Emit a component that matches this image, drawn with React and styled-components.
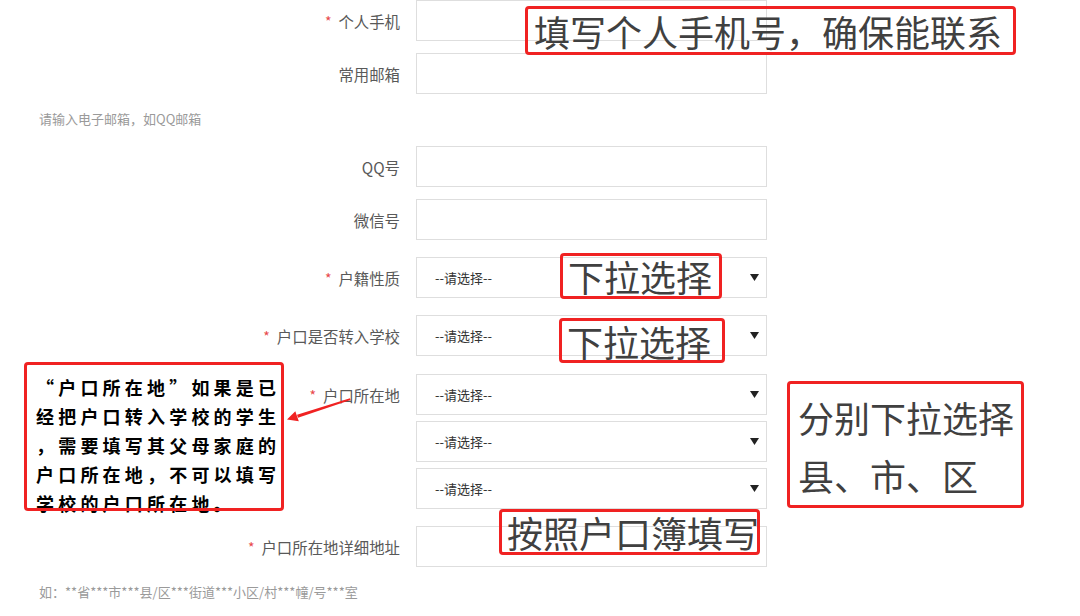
import React from "react";
import styled, { createGlobalStyle } from "styled-components";

const Global = createGlobalStyle`
  html, body { margin: 0; padding: 0; background: #fff; }
  * { box-sizing: border-box; }
`;

const Page = styled.div`
  position: relative;
  width: 1080px;
  height: 616px;
  overflow: hidden;
  background: #fff;
  font-family: "Noto Sans CJK SC", "Noto Sans", sans-serif;
`;

const Form = styled.div`
  display: flex;
  flex-direction: column;
`;

const Row = styled.div`
  display: grid;
  grid-template-columns: 400px 351px;
  column-gap: 16px;
  align-items: start;
  margin-top: ${(p) => p.$mt || 0}px;
`;

const Label = styled.div`
  height: 41px;
  display: flex;
  align-items: center;
  justify-content: flex-end;
  font-size: 15.4px;
  color: #595959;
  white-space: nowrap;
`;

const Req = styled.span`
  color: #e8484a;
  margin-right: 7px;
  font-size: 14px;
`;

const Fields = styled.div`
  display: flex;
  flex-direction: column;
  gap: 6px;
`;

const Input = styled.div`
  height: 41px;
  border: 1px solid #dedede;
  background: #fff;
`;

const Select = styled.div`
  height: 41px;
  border: 1px solid #dedede;
  background: #fff;
  display: flex;
  align-items: center;
  justify-content: space-between;
  padding: 0 7px 0 18px;
  font-size: 13px;
  color: #333;
`;

const Hint = styled.div`
  padding-left: 39px;
  font-size: 13px;
  line-height: 18px;
  color: #9a9a9a;
  margin-top: ${(p) => p.$mt || 0}px;
`;

const Callout = styled.div`
  position: absolute;
  left: ${(p) => p.$x}px;
  top: ${(p) => p.$y}px;
  width: ${(p) => p.$w}px;
  height: ${(p) => p.$h}px;
  border: 3px solid #f02222;
  border-radius: 4px;
  padding: ${(p) => p.$pad || "0 0 0 6px"};
  font-size: 36px;
  line-height: ${(p) => p.$lh || 40}px;
  color: #404040;
  white-space: nowrap;
  display: flex;
  flex-direction: column;
  justify-content: ${(p) => (p.$top ? "flex-start" : "center")};
  background: transparent;
`;

const Note = styled.div`
  position: absolute;
  left: 24px;
  top: 362px;
  width: 260px;
  height: 149px;
  padding: 11px 0 0 12px;
  font-size: 18px;
  font-weight: 700;
  letter-spacing: 4.2px;
  line-height: 29px;
  color: #000;
  white-space: nowrap;
  &::after {
    content: "";
    position: absolute;
    inset: 0;
    border: 3px solid #f02222;
    border-radius: 4px;
    z-index: 2;
  }
`;

const NoteLine = styled.div`
  position: relative;
  z-index: 1;
`;

const Arrow = styled.svg`
  position: absolute;
  left: 280px;
  top: 390px;
  overflow: visible;
`;

const Caret = () => (
  <svg width="9" height="7" viewBox="0 0 9 7">
    <polygon points="0,0 9,0 4.5,7" fill="#222" />
  </svg>
);

const Sel = () => (
  <Select>
    <span>--请选择--</span>
    <Caret />
  </Select>
);

export default function App() {
  return (
    <Page>
      <Global />
      <Form>
        <Row>
          <Label>
            <Req>*</Req>个人手机
          </Label>
          <Input />
        </Row>
        <Row $mt={12}>
          <Label>常用邮箱</Label>
          <Input />
        </Row>
        <Hint $mt={16}>请输入电子邮箱，如QQ邮箱</Hint>
        <Row $mt={18}>
          <Label>QQ号</Label>
          <Input />
        </Row>
        <Row $mt={12}>
          <Label>微信号</Label>
          <Input />
        </Row>
        <Row $mt={17}>
          <Label>
            <Req>*</Req>户籍性质
          </Label>
          <Sel />
        </Row>
        <Row $mt={17}>
          <Label>
            <Req>*</Req>户口是否转入学校
          </Label>
          <Sel />
        </Row>
        <Row $mt={18}>
          <Label>
            <Req>*</Req>户口所在地
          </Label>
          <Fields>
            <Sel />
            <Sel />
            <Sel />
          </Fields>
        </Row>
        <Row $mt={17}>
          <Label>
            <Req>*</Req>户口所在地详细地址
          </Label>
          <Input />
        </Row>
        <Hint $mt={16}>如：**省***市***县/区***街道***小区/村***幢/号***室</Hint>
      </Form>

      <Callout $x={525} $y={6} $w={491} $h={49}>
        填写个人手机号，确保能联系
      </Callout>
      <Callout $x={560} $y={253} $w={162} $h={46} $pad="0 0 0 5px">
        下拉选择
      </Callout>
      <Callout $x={559} $y={318} $w={166} $h={45} $pad="0 0 0 5px">
        下拉选择
      </Callout>
      <Callout $x={787} $y={381} $w={237} $h={127} $lh={58} $top $pad="4px 0 0 8px">
        <div>分别下拉选择</div>
        <div>县、市、区</div>
      </Callout>
      <Callout $x={499} $y={509} $w={261} $h={46} $pad="0 0 0 5px">
        按照户口簿填写
      </Callout>

      <Note>
        <NoteLine>“户口所在地”如果是已</NoteLine>
        <NoteLine>经把户口转入学校的学生</NoteLine>
        <NoteLine>，需要填写其父母家庭的</NoteLine>
        <NoteLine>户口所在地，不可以填写</NoteLine>
        <NoteLine>学校的户口所在地。</NoteLine>
      </Note>

      <Arrow width="80" height="40" viewBox="280 390 80 40">
        <polygon points="350,398.2 350.6,400 298,417.8 297,414.8" fill="#f02222" />
        <polygon points="287,419.5 298.8,421.2 295.3,411.2" fill="#f02222" />
      </Arrow>
    </Page>
  );
}
